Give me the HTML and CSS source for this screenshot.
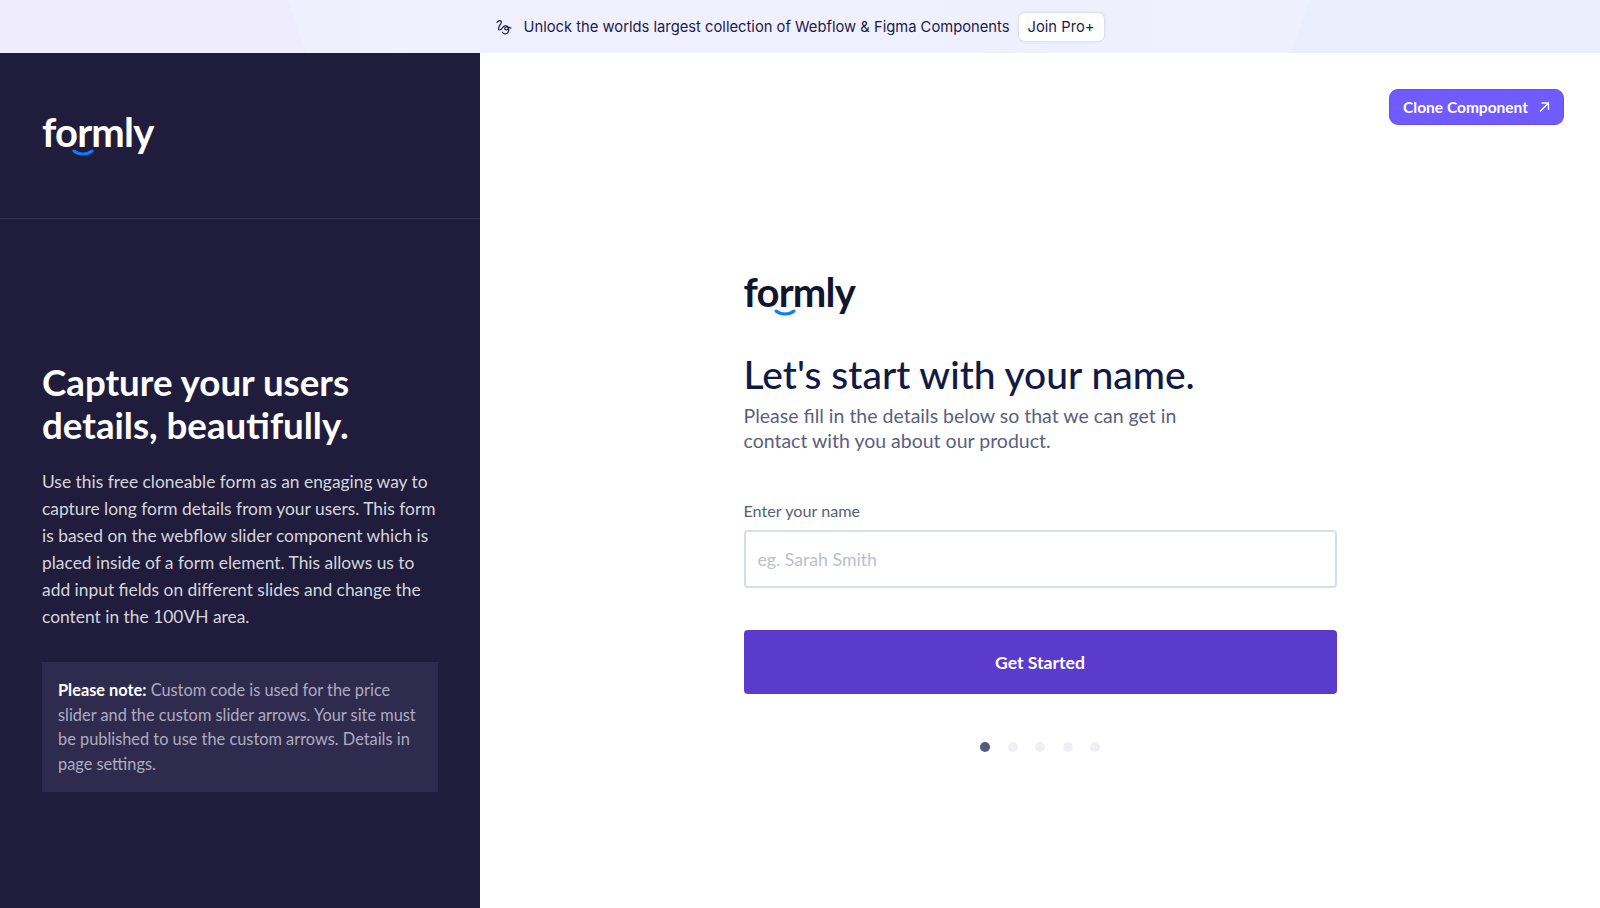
FILE: index.html
```html
<!DOCTYPE html>
<html lang="en">
<head>
  <meta charset="UTF-8" />
  <meta name="viewport" content="width=device-width, initial-scale=1.0"/>
  <title>Formly - Multi Step Form</title>
  <link rel="stylesheet" href="styles.css">
</head>
<body>
  <div class="promo">
    <svg class="promo-icon" viewBox="0 0 16 16" width="16" height="16" fill="none" stroke="#1c1b4b" stroke-width="1.2" stroke-linecap="round" stroke-linejoin="round">
      <path d="M1 3.5C2.5.8 5.8 1 5.2 3.6 4.7 5.8 1.8 7.6 2.6 10.2 3.2 12 5.4 10.4 6.6 8.6 7.6 7 9.8 6.2 11.4 7.2 13 8.2 12.4 10.8 10.4 10.8 8.4 10.8 8 8.4 10 8 11.8 7.7 13.4 8.6 15 9"/>
      <path d="M12.6 9.6C13 12.4 12 14.6 9.4 14.8 8 14.9 7 14.2 6.6 13.2"/>
    </svg>
    <span class="promo-text">Unlock the worlds largest collection of Webflow &amp; Figma Components</span>
    <a class="promo-btn" href="#">Join Pro+</a>
  </div>

  <div class="page">
    <aside class="sidebar">
      <div class="sidebar-top">
        <div class="logo logo-light">formly<svg class="smile" viewBox="0 0 22 8" width="22" height="8"><path d="M2 2c5 4 13 4 18 0" fill="none" stroke="#0a7cff" stroke-width="3" stroke-linecap="round"/></svg></div>
      </div>
      <div class="sidebar-body">
        <h2>Capture your users details, beautifully.</h2>
        <p>Use this free cloneable form as an engaging way to capture long form details from your users. This form is based on the webflow slider component which is placed inside of a form element. This allows us to add input fields on different slides and change the content in the 100VH area.</p>
        <div class="note"><strong>Please note:</strong> Custom code is used for the price slider and the custom slider arrows. Your site must be published to use the custom arrows. Details in page settings.</div>
      </div>
    </aside>

    <main class="content">
      <a class="clone-btn" href="#">Clone Component
        <svg viewBox="0 0 12 12" width="12" height="12" fill="none" stroke="#fff" stroke-width="1.3"><path d="M2 10.5 10 2.5M3.5 2H10.5V9"/></svg>
      </a>
      <form class="form-wrap">
        <div class="logo logo-dark">formly<svg class="smile" viewBox="0 0 22 8" width="22" height="8"><path d="M2 2c5 4 13 4 18 0" fill="none" stroke="#0a7cff" stroke-width="3" stroke-linecap="round"/></svg></div>
        <h1>Let's start with your name.</h1>
        <p class="lead">Please fill in the details below so that we can get in contact with you about our product.</p>
        <label for="name">Enter your name</label>
        <input type="text" id="name" placeholder="eg. Sarah Smith" />
        <button type="button">Get Started</button>
        <div class="dots">
          <span class="dot active"></span>
          <span class="dot"></span>
          <span class="dot"></span>
          <span class="dot"></span>
          <span class="dot"></span>
        </div>
      </form>
    </main>
  </div>
</body>
</html>
```

FILE: styles.css
```css
* {
  box-sizing: border-box;
}
html, body {
  height: 100%;
}
body {
  margin: 0;
  display: flex;
  flex-direction: column;
  font-family: Lato, "Open Sans", sans-serif;
  background: #fff;
  overflow: hidden;
}
a {
  text-decoration: none;
}

/* promo bar */
.promo {
  position: relative;
  flex: 0 0 53px;
  display: flex;
  align-items: center;
  justify-content: center;
  font-family: Inter, sans-serif;
  font-size: 14.75px;
  color: #1c1b4b;
  background: linear-gradient(90deg, #f1effe 0%, #f0f0fe 50%, #edf1fd 100%);
}
.promo::before, .promo::after {
  content: "";
  position: absolute;
  top: 0;
  bottom: 0;
}
.promo::before {
  left: 0;
  width: 306px;
  background: #efedfd;
  clip-path: polygon(0 0, 288px 0, 100% 100%, 0 100%);
}
.promo::after {
  right: 0;
  width: 310px;
  background: #e9effd;
  clip-path: polygon(20px 0, 100% 0, 100% 100%, 0 100%);
}
.promo-icon, .promo-text, .promo-btn {
  position: relative;
  z-index: 1;
}
.promo-icon {
  margin-right: 11px;
}
.promo-btn {
  margin-left: 9px;
  padding: 5px 9px;
  color: #1c1b4b;
  background: #fff;
  border-radius: 6px;
  box-shadow: 0 0 3px rgba(60,60,140,0.25);
}

.page {
  flex: 1;
  display: flex;
  min-height: 0;
}

/* left column */
.sidebar {
  flex: 0 0 480px;
  background: #1f1d3b;
  color: #fff;
}
.sidebar-top {
  height: 166px;
  padding: 59px 42px 0;
  border-bottom: 1px solid #33314f;
}
.sidebar-body {
  padding: 142px 42px 0;
}
.sidebar h2 {
  margin: 0;
  font-size: 36.7px;
  line-height: 43px;
  font-weight: 700;
}
.sidebar p {
  margin: 21px 0 0;
  font-size: 17.4px;
  line-height: 27px;
  color: #d6d5de;
}
.note {
  margin-top: 32px;
  padding: 16px;
  font-size: 16.35px;
  line-height: 24.5px;
  color: #aeacc0;
  background: #2f2b4f;
}
.note strong {
  color: #fff;
  font-weight: 700;
}

/* logo */
.logo {
  position: relative;
  width: max-content;
  font-size: 40px;
  line-height: 40px;
  font-weight: 700;
  letter-spacing: -0.8px;
}
.logo-light {
  color: #fff;
}
.logo-dark {
  color: #101530;
}
.smile {
  position: absolute;
  left: 30px;
  bottom: -5px;
}

/* right column */
.content {
  flex: 1;
  display: flex;
  flex-direction: column;
  align-items: center;
  padding: 36px 36px 0;
}
.clone-btn {
  align-self: flex-end;
  display: flex;
  align-items: center;
  gap: 10px;
  height: 36px;
  padding: 0 13px;
  font-size: 15.5px;
  font-weight: 700;
  color: #fff;
  background: #6f5bff;
  border: 1px solid #6450f2;
  border-radius: 9px;
}
.form-wrap {
  width: 593px;
  margin-top: 147px;
}
h1 {
  margin: 39px 0 0;
  font-size: 39px;
  line-height: 46px;
  font-weight: 500;
  color: #101a45;
}
.lead {
  margin: 7px 0 0;
  width: 450px;
  font-size: 19.5px;
  line-height: 24.5px;
  color: #5b607f;
}
label {
  display: block;
  margin-top: 48px;
  font-size: 16.2px;
  line-height: 20px;
  color: #566078;
}
input {
  display: block;
  width: 100%;
  height: 58px;
  margin-top: 9px;
  padding: 0 12px;
  font: inherit;
  font-size: 17.7px;
  border: 2px solid #d8dee8;
  border-radius: 4px;
  outline: none;
}
input::placeholder {
  color: #b9bfcc;
}
button {
  display: block;
  width: 100%;
  height: 64px;
  margin-top: 42px;
  font: inherit;
  font-size: 17.6px;
  font-weight: 700;
  color: #fff;
  background: #5b3bcb;
  border: none;
  border-radius: 4px;
  cursor: pointer;
}
.dots {
  display: flex;
  justify-content: center;
  gap: 17.5px;
  margin-top: 48px;
}
.dot {
  width: 10px;
  height: 10px;
  border-radius: 50%;
  background: #eff0f4;
}
.dot.active {
  background: #555a7c;
}
```
